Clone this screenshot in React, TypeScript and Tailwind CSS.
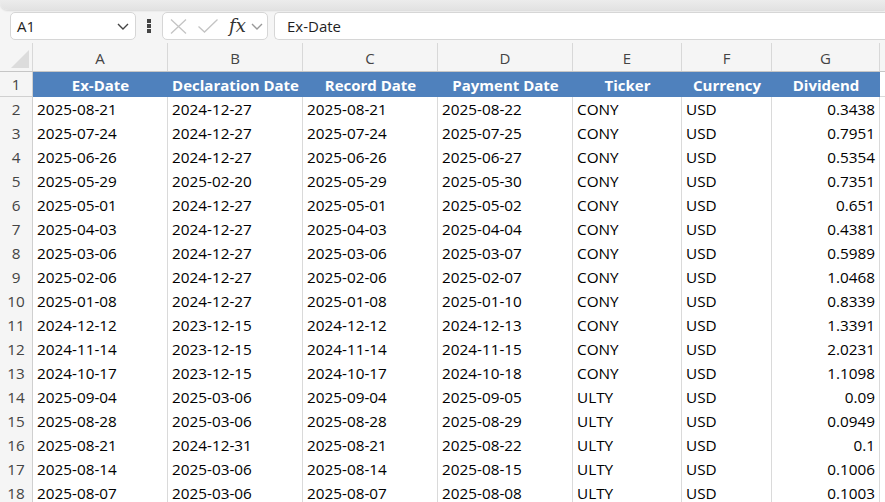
const columns = ["A", "B", "C", "D", "E", "F", "G"];
const headers = ["Ex-Date", "Declaration Date", "Record Date", "Payment Date", "Ticker", "Currency", "Dividend"];

const rows: string[][] = [
  ["2025-08-21", "2024-12-27", "2025-08-21", "2025-08-22", "CONY", "USD", "0.3438"],
  ["2025-07-24", "2024-12-27", "2025-07-24", "2025-07-25", "CONY", "USD", "0.7951"],
  ["2025-06-26", "2024-12-27", "2025-06-26", "2025-06-27", "CONY", "USD", "0.5354"],
  ["2025-05-29", "2025-02-20", "2025-05-29", "2025-05-30", "CONY", "USD", "0.7351"],
  ["2025-05-01", "2024-12-27", "2025-05-01", "2025-05-02", "CONY", "USD", "0.651"],
  ["2025-04-03", "2024-12-27", "2025-04-03", "2025-04-04", "CONY", "USD", "0.4381"],
  ["2025-03-06", "2024-12-27", "2025-03-06", "2025-03-07", "CONY", "USD", "0.5989"],
  ["2025-02-06", "2024-12-27", "2025-02-06", "2025-02-07", "CONY", "USD", "1.0468"],
  ["2025-01-08", "2024-12-27", "2025-01-08", "2025-01-10", "CONY", "USD", "0.8339"],
  ["2024-12-12", "2023-12-15", "2024-12-12", "2024-12-13", "CONY", "USD", "1.3391"],
  ["2024-11-14", "2023-12-15", "2024-11-14", "2024-11-15", "CONY", "USD", "2.0231"],
  ["2024-10-17", "2023-12-15", "2024-10-17", "2024-10-18", "CONY", "USD", "1.1098"],
  ["2025-09-04", "2025-03-06", "2025-09-04", "2025-09-05", "ULTY", "USD", "0.09"],
  ["2025-08-28", "2025-03-06", "2025-08-28", "2025-08-29", "ULTY", "USD", "0.0949"],
  ["2025-08-21", "2024-12-31", "2025-08-21", "2025-08-22", "ULTY", "USD", "0.1"],
  ["2025-08-14", "2025-03-06", "2025-08-14", "2025-08-15", "ULTY", "USD", "0.1006"],
  ["2025-08-07", "2025-03-06", "2025-08-07", "2025-08-08", "ULTY", "USD", "0.1003"],
];

const gridCols = "grid grid-cols-[33px_135px_135px_135px_135px_109px_90px_108px_1fr]";

function Chevron({ w, h, color }: { w: number; h: number; color: string }) {
  return (
    <svg width={w} height={h} viewBox={`0 0 ${w} ${h}`} fill="none">
      <path d={`M1 1 L${w / 2} ${h - 1} L${w - 1} 1`} stroke={color} strokeWidth={1.4} />
    </svg>
  );
}

function FormulaBar() {
  return (
    <div className="flex h-[28px] items-stretch pl-[10px]">
      <div className="flex w-[126px] items-center justify-between rounded-[5px] border border-[#d6d6d6] bg-white pl-[6px] pr-[6px] text-[15px] text-[#1f1f1f]">
        <span>A1</span>
        <Chevron w={12} h={7} color="#444" />
      </div>
      <div className="flex w-[26px] flex-col items-center justify-center gap-[1.5px]">
        <span className="size-[3.5px] bg-[#444]" />
        <span className="size-[3.5px] bg-[#444]" />
        <span className="size-[3.5px] bg-[#444]" />
      </div>
      <div className="flex w-[106px] items-center rounded-[5px] border border-[#d6d6d6] bg-white pl-[7px]">
        <svg width="17" height="15" viewBox="0 0 17 15" fill="none">
          <path d="M1 0.5 L16 14.5 M16 0.5 L1 14.5" stroke="#c4c4c4" strokeWidth="1.3" />
        </svg>
        <svg width="20" height="14" viewBox="0 0 20 14" fill="none" className="ml-[11px]">
          <path d="M0.5 7.5 L6.5 13 L19.5 0.5" stroke="#c4c4c4" strokeWidth="1.3" />
        </svg>
        <span className="ml-[11px] font-['DejaVu_Serif',serif] text-[18px] italic leading-none text-[#333]">fx</span>
        <span className="ml-[5px]">
          <Chevron w={12} h={7} color="#999" />
        </span>
      </div>
      <div className="ml-[6px] flex flex-1 items-center rounded-l-[5px] border border-r-0 border-[#d6d6d6] bg-white pl-[12px] text-[15px] text-[#1f1f1f]">
        Ex-Date
      </div>
    </div>
  );
}

export default function App() {
  return (
    <div className="h-[502px] w-[885px] overflow-hidden bg-[#f5f5f5] font-['Open_Sans',sans-serif]">
      <div className="h-[10px] rounded-bl-[8px] bg-[linear-gradient(#ececec,#e2e2e2)] shadow-[0_1px_2px_rgba(0,0,0,0.12)]" />
      <div className="pt-[2px]">
        <FormulaBar />
      </div>

      <div className={`${gridCols} mt-[3px] h-[29px] border-b border-[#c6c6c6] bg-[#f5f5f5] text-[15px] text-[#444]`}>
        <div className="relative border-r border-[#d8d8d8]">
          <div className="absolute bottom-[3px] right-[3px] h-0 w-0 border-b-[18px] border-l-[18px] border-b-[#dcdcdc] border-l-transparent" />
        </div>
        {columns.map((c) => (
          <div key={c} className="flex items-center justify-center border-r border-[#d8d8d8] pt-[2px]">
            {c}
          </div>
        ))}
        <div />
      </div>

      <div className={`${gridCols} h-[25px] text-[15px]`}>
        <div className="flex items-center justify-center border-r border-b border-[#d0d0d0] bg-[#f5f5f5] pt-[1px] text-[#444]">1</div>
        {headers.map((h) => (
          <div key={h} className="flex items-center justify-center bg-[#4f81bd] pt-[1px] font-bold text-white">
            {h}
          </div>
        ))}
        <div className="border-b border-[#dadada] bg-white" />
      </div>

      {rows.map((row, i) => (
        <div key={i} className={`${gridCols} h-[24px] text-[15.3px] text-black`}>
          <div className="flex items-center justify-center border-r border-b border-[#d0d0d0] bg-[#f5f5f5] pt-[1px] text-[#444]">
            {i + 2}
          </div>
          {row.map((v, j) => (
            <div
              key={j}
              className={`flex items-center border-r border-b border-[#dadada] bg-white pt-[1px] ${
                j === 6 ? "justify-end pr-[4px]" : "pl-[4px]"
              }`}
            >
              {v}
            </div>
          ))}
          <div className="border-b border-[#dadada] bg-white" />
        </div>
      ))}
    </div>
  );
}
